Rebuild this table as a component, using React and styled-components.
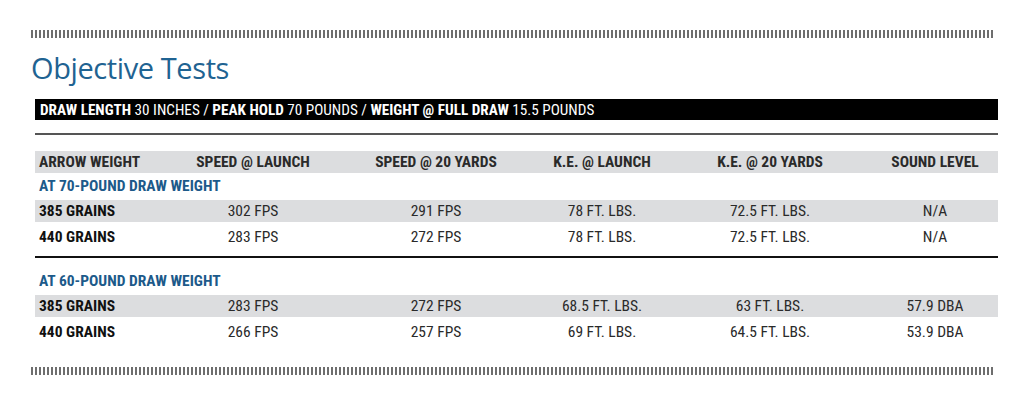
import React from 'react';
import styled, { createGlobalStyle } from 'styled-components';

const Global = createGlobalStyle`
  html, body { margin: 0; padding: 0; background: #fff; }
  body { font-family: "Roboto Condensed", "Liberation Sans Narrow", Roboto, sans-serif; }
`;

const COLS = '135px 166px 200px 132px 204px 126px';

const sections = [
  {
    label: 'AT 70-POUND DRAW WEIGHT',
    rows: [
      ['385 GRAINS', '302 FPS', '291 FPS', '78 FT. LBS.', '72.5 FT. LBS.', 'N/A'],
      ['440 GRAINS', '283 FPS', '272 FPS', '78 FT. LBS.', '72.5 FT. LBS.', 'N/A'],
    ],
  },
  {
    label: 'AT 60-POUND DRAW WEIGHT',
    rows: [
      ['385 GRAINS', '283 FPS', '272 FPS', '68.5 FT. LBS.', '63 FT. LBS.', '57.9 DBA'],
      ['440 GRAINS', '266 FPS', '257 FPS', '69 FT. LBS.', '64.5 FT. LBS.', '53.9 DBA'],
    ],
  },
];

const headers = ['ARROW WEIGHT', 'SPEED @ LAUNCH', 'SPEED @ 20 YARDS', 'K.E. @ LAUNCH', 'K.E. @ 20 YARDS', 'SOUND LEVEL'];

const App = () => {
  return (
    <Page>
      <Global />
      <Dashes />
      <Title>Objective Tests</Title>
      <Table>
        <SpecBar>
          <b>DRAW LENGTH</b> 30 INCHES / <b>PEAK HOLD</b> 70 POUNDS / <b>WEIGHT @ FULL DRAW</b> 15.5 POUNDS
        </SpecBar>
        <Rule />
        <Row shaded head>
          {headers.map((h) => <Cell key={h}>{h}</Cell>)}
        </Row>
        {sections.map((s, i) => (
          <Section key={s.label} first={i === 0}>
            <Label>{s.label}</Label>
            {s.rows.map((r, j) => (
              <Row key={j} shaded={j === 0}>
                {r.map((c, k) => <Cell key={k} bold={k === 0}>{c}</Cell>)}
              </Row>
            ))}
          </Section>
        ))}
      </Table>
      <Dashes bottom />
    </Page>
  );
};

export default App;

const Page = styled.div`
  width: 1025px;
  height: 410px;
  box-sizing: border-box;
  padding: 30px 27px 0 31px;
  display: flex;
  flex-direction: column;
`;

const Dashes = styled.div`
  height: 8px;
  width: 962px;
  margin-top: ${(p) => (p.bottom ? '16px' : '0')};
  background: repeating-linear-gradient(90deg, #6e6e6e 0 2px, transparent 2px 4px);
`;

const Title = styled.h1`
  margin: 10px 0 0 0;
  font-family: "Open Sans", "Noto Sans", sans-serif;
  font-weight: 400;
  font-size: 29px;
  line-height: 40px;
  letter-spacing: -0.4px;
  color: #1f6392;
`;

const Table = styled.div`
  margin-left: 4px;
  margin-top: 11px;
  width: 963px;
  display: flex;
  flex-direction: column;
`;

const SpecBar = styled.div`
  background: #000;
  color: #fff;
  height: 21px;
  line-height: 22px;
  font-size: 15.2px;
  padding-left: 5px;
  b { font-weight: 700; }
`;

const Rule = styled.div`
  height: 2px;
  background: #555;
  margin: 13px 0 16px;
`;

const Row = styled.div`
  display: grid;
  grid-template-columns: ${COLS};
  align-items: center;
  height: 22px;
  background: ${(p) => (p.shaded ? '#dcdddf' : 'transparent')};
  font-size: 15.5px;
  color: #2a2a2a;
  font-weight: ${(p) => (p.head ? 700 : 400)};
  & + & { margin-top: 4px; }
`;

const Cell = styled.div`
  text-align: center;
  font-weight: ${(p) => (p.bold ? 700 : 'inherit')};
  color: ${(p) => (p.bold ? '#111' : 'inherit')};
  &:first-child {
    text-align: left;
    padding-left: 4px;
  }
`;

const Section = styled.div`
  display: flex;
  flex-direction: column;
  padding-top: ${(p) => (p.first ? '2px' : '12px')};
  padding-bottom: 8px;
  border-top: ${(p) => (p.first ? 'none' : '2px solid #111')};
`;

const Label = styled.div`
  height: 23px;
  line-height: 23px;
  padding-left: 4px;
  margin-bottom: 2px;
  font-size: 15.5px;
  font-weight: 700;
  color: #1c5a8a;
`;
